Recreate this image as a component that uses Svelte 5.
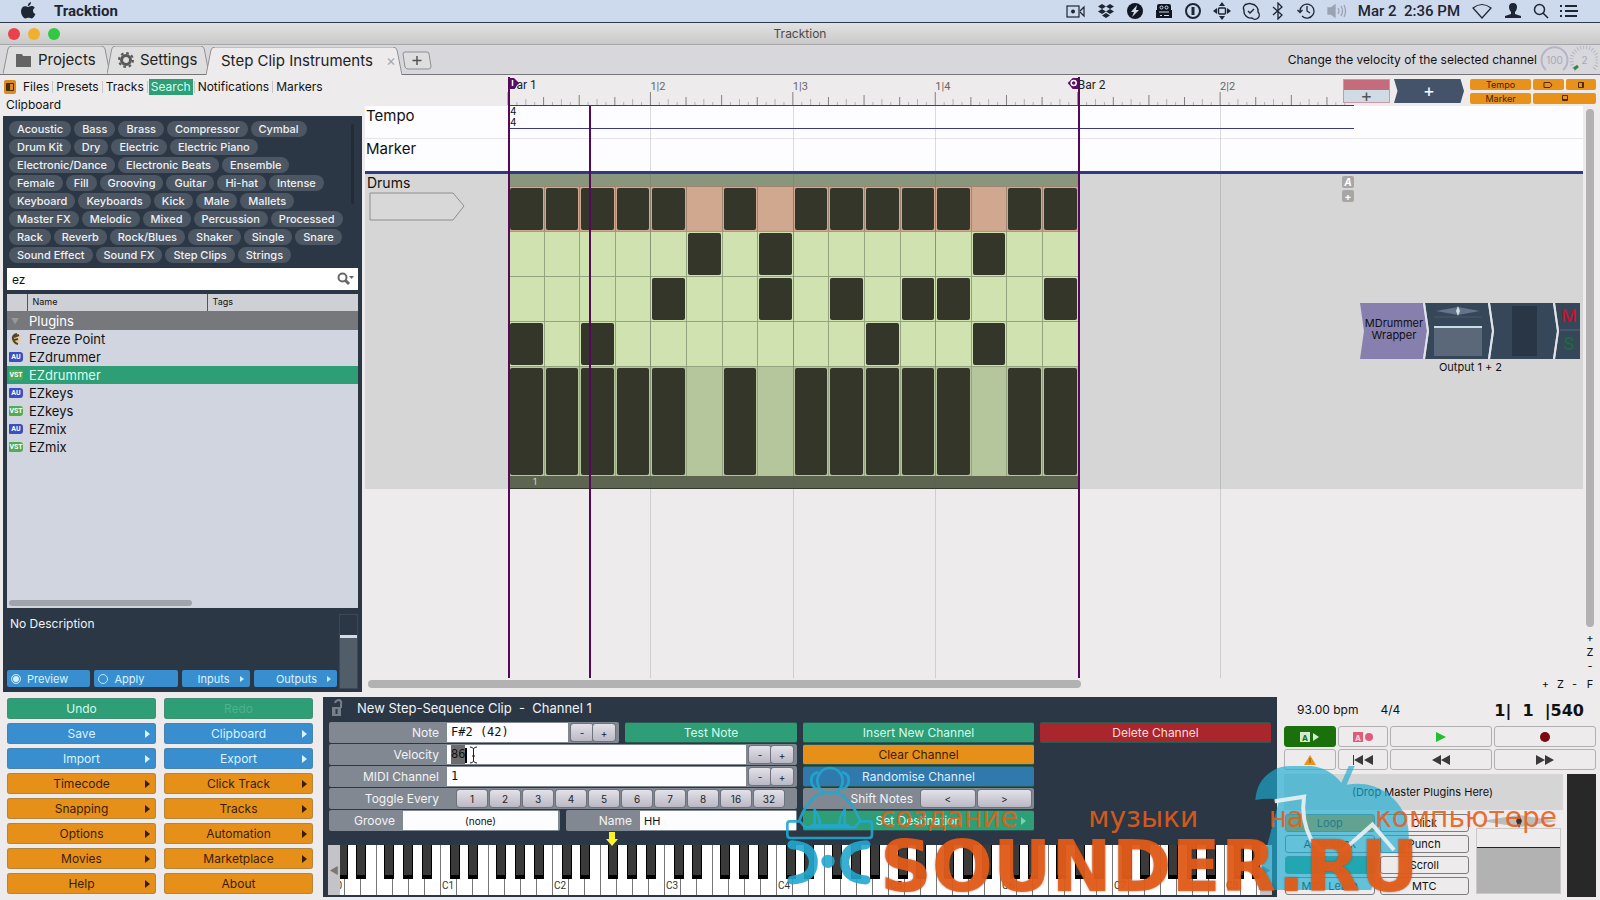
<script>
  const tabs = ['Files', 'Presets', 'Tracks', 'Search', 'Notifications', 'Markers', 'Clipboard'];
  let activeTab = $state('Search');

  const tagRows = [
    ['Acoustic', 'Bass', 'Brass', 'Compressor', 'Cymbal'],
    ['Drum Kit', 'Dry', 'Electric', 'Electric Piano'],
    ['Electronic/Dance', 'Electronic Beats', 'Ensemble'],
    ['Female', 'Fill', 'Grooving', 'Guitar', 'Hi-hat', 'Intense'],
    ['Keyboard', 'Keyboards', 'Kick', 'Male', 'Mallets'],
    ['Master FX', 'Melodic', 'Mixed', 'Percussion', 'Processed'],
    ['Rack', 'Reverb', 'Rock/Blues', 'Shaker', 'Single', 'Snare'],
    ['Sound Effect', 'Sound FX', 'Step Clips', 'Strings'],
  ];

  const plugins = [
    { type: 'FX', name: 'Freeze Point' },
    { type: 'AU', name: 'EZdrummer' },
    { type: 'VST', name: 'EZdrummer' },
    { type: 'AU', name: 'EZkeys' },
    { type: 'VST', name: 'EZkeys' },
    { type: 'AU', name: 'EZmix' },
    { type: 'VST', name: 'EZmix' },
  ];
  let selectedPlugin = $state(2);

  let search = $state('ez');
  let note = $state('F#2 (42)');
  let velocity = $state('86');
  let midiChannel = $state('1');
  let clipName = $state('HH');

  const menu = [
    { label: 'Undo', kind: 'green' },
    { label: 'Redo', kind: 'green', disabled: true },
    { label: 'Save', kind: 'blue', more: true },
    { label: 'Clipboard', kind: 'blue', more: true },
    { label: 'Import', kind: 'blue', more: true },
    { label: 'Export', kind: 'blue', more: true },
    { label: 'Timecode', kind: 'orange', more: true },
    { label: 'Click Track', kind: 'orange', more: true },
    { label: 'Snapping', kind: 'orange', more: true },
    { label: 'Tracks', kind: 'orange', more: true },
    { label: 'Options', kind: 'orange', more: true },
    { label: 'Automation', kind: 'orange', more: true },
    { label: 'Movies', kind: 'orange', more: true },
    { label: 'Marketplace', kind: 'orange', more: true },
    { label: 'Help', kind: 'orange', more: true },
    { label: 'About', kind: 'orange' },
  ];

  // x = step on, . = step off
  let pattern = $state([
    'xxxxx.x.xxxxx.xx',
    '.....x.x.....x..',
    '....x..x.x.xx..x',
    'x.x.......x..x..',
  ]);

  function toggleStep(row, i) {
    const s = pattern[row];
    pattern[row] = s.slice(0, i) + (s[i] === 'x' ? '.' : 'x') + s.slice(i + 1);
  }

  // beats shown between the left edge of the ruler and its right end
  const BEATS = 5.94;
  const pct = (beat) => (beat / BEATS) * 100;

  const ticks = Array.from({ length: 95 }, (_, i) => ({
    x: pct(i / 16),
    h: i % 16 === 0 ? 13 : i % 8 === 0 ? 10 : i % 4 === 0 ? 8 : i % 2 === 0 ? 6 : 3,
    c: i % 4 === 0 ? '#808080' : '#b2b2b2',
  }));
  const beatLabels = [
    { beat: 1, text: '1|2' },
    { beat: 2, text: '1|3' },
    { beat: 3, text: '1|4' },
    { beat: 5, text: '2|2' },
  ];

  const toggles = [1, 2, 3, 4, 5, 6, 7, 8, 16, 32];

  const KEY = 16;
  const whiteKeys = Array.from({ length: 59 }, (_, i) => i * KEY - 12);
  const octaves = Array.from({ length: 9 }, (_, i) => i * KEY * 7 - 12);
  const blackKeys = octaves.flatMap((x) => [10, 28, 56, 75, 94].map((o) => x + o)).filter((x) => x < 920);

  function selectAll(node) {
    node.focus();
    node.select();
  }
</script>

{#snippet stepper(label)}
  <span class="stepper">
    <button aria-label="{label} down">-</button><button aria-label="{label} up">+</button>
  </span>
{/snippet}

<div class="screen">
  <header class="menubar">
    <svg class="apple" width="16" height="18" viewBox="0 0 16 18" fill="#1d2634">
      <path d="M11 0c.2 2-1.400 4-3.200 4C7.600 2.200 9.200.4 11 0zM8 5c.8 0 2-1 3.600-1 1.400 0 2.500.7 3.200 1.700-2.700 1.600-2.200 5.300.6 6.300-.7 1.900-2.200 4.500-3.900 4.500-1.200 0-1.600-.7-3-.7s-1.900.7-3 .7C3.400 16.500 1 12.600 1 9.300 1 6.200 3 4.300 5 4.300 6.300 4.300 7.300 5 8 5z" />
    </svg>
    <b>Tracktion</b>
    <div class="tray">
      <svg width="20" height="16" viewBox="0 0 20 16" fill="none" stroke="#1d2634" stroke-width="1.200"><rect x="1" y="3" width="12" height="11" /><path d="M14 8l4-4v9l-4-4" /><circle cx="7" cy="8.500" r="2" fill="#1d2634" stroke="none" /></svg>
      <svg width="18" height="16" viewBox="0 0 18 16" fill="#1d2634"><path d="M5 1l4 2.500L5 6 1 3.500zM13 1l4 2.500L13 6 9 3.500zM5 6l4 2.500L5 11 1 8.500zM13 6l4 2.500-4 2.500-4-2.500zM9 10l4 2.500L9 15l-4-2.500z" /></svg>
      <svg width="18" height="18" viewBox="0 0 18 18"><circle cx="9" cy="9" r="8" fill="#111722" /><path d="M11 3L5 10h3l-2 5 7-7h-3z" fill="#cdd9ec" /></svg>
      <svg width="18" height="16" viewBox="0 0 18 16"><path d="M4 1h10q2 0 2 2v4h1v8H1V7h1V3q0-2 2-2z" fill="#111722" /><circle cx="6.500" cy="4.500" r="1.500" fill="none" stroke="#cdd9ec" /><circle cx="11.500" cy="4.500" r="1.500" fill="none" stroke="#cdd9ec" /><path d="M4 9h10M5 12.500h2M9 12.500h5" stroke="#cdd9ec" /></svg>
      <svg width="18" height="18" viewBox="0 0 18 18" fill="none" stroke="#1d2634" stroke-width="2"><circle cx="9" cy="9" r="7" /><path d="M9 5v8" stroke-width="3" /></svg>
      <svg width="18" height="18" viewBox="0 0 18 18" fill="#1d2634"><path d="M9 0l3 4H6zM9 18l3-4H6zM0 9l4-3v6zM18 9l-4-3v6z" /><rect x="5.500" y="6" width="7" height="6" rx="1" fill="none" stroke="#1d2634" stroke-width="1.500" /></svg>
      <svg width="18" height="18" viewBox="0 0 18 18" fill="none" stroke="#1d2634" stroke-width="1.400"><path d="M5.500 2a4 4 0 0 1 4 0 7 7 0 0 1 6.500 8 4 4 0 0 1-6 6A7 7 0 0 1 2 8a4 4 0 0 1 3.500-6zM6 9l2 2 4-4" /></svg>
      <svg width="14" height="18" viewBox="0 0 14 18" fill="none" stroke="#1d2634" stroke-width="1.300"><path d="M2 5l9 8-4 4V1l4 4-9 8" /></svg>
      <svg width="20" height="18" viewBox="0 0 20 18" fill="none" stroke="#1d2634" stroke-width="1.300"><path d="M4 9a7 7 0 1 1 2 5M1.500 8L4 10.500 6.500 8M11 4v5l3 2" /></svg>
      <svg width="20" height="16" viewBox="0 0 20 16" fill="none" stroke="#9aa3b3" stroke-width="1.300"><path d="M1 5h3l4-3v12l-4-3H1z" fill="#9aa3b3" /><path d="M11 5q2 3 0 6M14 3q3 5 0 10M17 2q3 6 0 12" /></svg>
      <span class="clock">Mar 2&nbsp; 2:36 PM</span>
      <svg width="22" height="16" viewBox="0 0 22 16" fill="none" stroke="#1d2634" stroke-width="1.200"><path d="M2 5q9-7 18 0l-9 10z" /></svg>
      <svg width="18" height="16" viewBox="0 0 18 16" fill="#1d2634"><path d="M9 0c3 0 4 2 4 4s-1 4-2 5v2l6 2v2H1v-2l6-2V9C6 8 5 6 5 4s1-4 4-4z" /></svg>
      <svg width="16" height="16" viewBox="0 0 16 16" fill="none" stroke="#1d2634" stroke-width="1.500"><circle cx="6.500" cy="6.500" r="5" /><path d="M10 10l5 5" /></svg>
      <svg width="18" height="14" viewBox="0 0 18 14" stroke="#1d2634" stroke-width="2"><path d="M5 2h12M5 7h13M5 12h12M0 2h2M0 7h2M0 12h2" /></svg>
    </div>
  </header>

  <div class="titlebar">
    <span class="light red"></span><span class="light amber"></span><span class="light lime"></span>
    <span class="title">Tracktion</span>
  </div>

  <nav class="tabbar">
    <button class="tab projects">
      <svg class="tab-shape" viewBox="0 0 108 28" preserveAspectRatio="none"><path d="M0 28L5 3q1-3 4-3h90q3 0 4 3l5 25" /></svg>
      <svg width="17" height="14" viewBox="0 0 17 14" fill="#646464"><path d="M1 1h6l1 2h8v11H1z" /></svg>
      Projects
    </button>
    <button class="tab settings">
      <svg class="tab-shape" viewBox="0 0 108 28" preserveAspectRatio="none"><path d="M0 28L5 3q1-3 4-3h90q3 0 4 3l5 25" /></svg>
      <svg width="16" height="16" viewBox="0 0 16 16" fill="none" stroke="#585858"><circle cx="8" cy="8" r="4.500" stroke-width="3" /><circle cx="8" cy="8" r="7" stroke-width="2" stroke-dasharray="2.700 2.800" /></svg>
      Settings
    </button>
    <button class="tab edit">
      <svg class="tab-shape active" viewBox="0 0 196 28" preserveAspectRatio="none"><path d="M0 28L5 3q1-3 4-3h178q3 0 4 3l5 25" /></svg>
      Step Clip Instruments <span class="close">×</span>
    </button>
    <button class="new-tab" aria-label="New tab">
      <svg width="30" height="19" viewBox="0 0 30 19" fill="#dedede" stroke="#8f8f93"><path d="M1 3q0-2 2-2h22q2 0 2 2l2 12q0 3-2 3H6q-2 0-3-2z" /><path d="M15 5v9M10.500 9.500h9" stroke="#555" stroke-width="1.500" /></svg>
    </button>
    <span class="hint">Change the velocity of the selected channel</span>
    <svg width="58" height="28" viewBox="0 0 58 28" fill="none" stroke="#b6b4ca" stroke-width="2">
      <path d="M6 24a13 13 0 1 1 17 0" />
      <path d="M36 24a13 13 0 1 1 17 0" stroke-width="4" stroke-dasharray="1 2" />
      <path d="M34 23l4-3" stroke="#2c8c3c" stroke-width="3" />
      <text x="14.500" y="18" class="dial">100</text><text x="44.500" y="18" class="dial">2</text>
    </svg>
  </nav>

  <main class="workspace">
    <aside class="sidebar">
      <div class="side-tabs">
        <svg width="12" height="14" viewBox="0 0 12 14"><rect width="12" height="14" rx="2" fill="#d98a22" /><path d="M2.500 3.500h7v7h-7z" fill="none" stroke="#4b2c05" /><path d="M3 4h3v6H3z" fill="#4b2c05" /></svg>
        {#each tabs as tab}
          <button class:active={tab === activeTab} onclick={() => (activeTab = tab)}>{tab}</button>
        {/each}
      </div>
      <section class="browser">
        <div class="tags">
          {#each tagRows as row}
            <div class="tag-row">
              {#each row as tag}<button>{tag}</button>{/each}
            </div>
          {/each}
        </div>
        <label class="search">
          <input type="text" aria-label="Search" bind:value={search} />
          <svg width="18" height="14" viewBox="0 0 18 14" fill="none" stroke="#686868" stroke-width="2"><circle cx="5.500" cy="5.500" r="4" /><path d="M8.500 8.500L12 12" stroke-width="3" /><path d="M12 4h5l-2.500 3z" fill="#686868" stroke="none" /></svg>
        </label>
        <div class="list">
          <table>
            <thead>
              <tr><th class="icon-col"></th><th class="name-col">Name</th><th>Tags</th></tr>
            </thead>
            <tbody>
              <tr class="group"><td><span class="fold">▼</span></td><td colspan="2">Plugins</td></tr>
              {#each plugins as p, i}
                <tr class:selected={i === selectedPlugin} onclick={() => (selectedPlugin = i)}>
                  <td>
                    {#if p.type === 'FX'}
                      <svg width="14" height="12" viewBox="0 0 14 12"><circle cx="7" cy="6" r="5" fill="#e2cfa8" /><path d="M8 1Q3 2 4 6t5 5M5 4l5-2M5 7l4-1" fill="none" stroke="#5a4420" stroke-width="2" /></svg>
                    {:else}
                      <span class="badge {p.type}">{p.type}</span>
                    {/if}
                  </td>
                  <td>{p.name}</td>
                  <td></td>
                </tr>
              {/each}
            </tbody>
          </table>
          <div class="list-scroll"></div>
        </div>
        <div class="info">
          <div class="info-main">
            <p>No Description</p>
            <div class="info-buttons">
              <label class="chip"><input type="checkbox" checked />Preview</label>
              <label class="chip"><input type="checkbox" />Apply</label>
              <button class="chip">Inputs <i></i></button>
              <button class="chip">Outputs <i></i></button>
            </div>
          </div>
          <input class="fader" type="range" min="0" max="100" value="72" aria-label="Preview level" />
        </div>
      </section>
    </aside>

    <section class="editor">
      <div class="arrange">
        <div class="ruler">
          <div class="time">
            <svg class="ticks" width="100%" height="31">
              {#each ticks as t}
                <line x1="{t.x}%" x2="{t.x}%" y1={30 - t.h} y2="30" stroke={t.c} stroke-width="1" />
              {/each}
              <line x1="0" x2="100%" y1="30.500" y2="30.500" stroke="#444" />
              <text x="1" y="14" class="bar-label">Bar 1</text>
              {#each beatLabels as l}
                <text x="{pct(l.beat)}%" y="15" class="beat-label">{l.text}</text>
              {/each}
              <text x="{pct(4)}%" y="14" class="bar-label">Bar 2</text>
              <path d="M0 3h6l5 5-5 6H0z" fill="#5b0c63" /><path d="M4.500 5v6" stroke="#fff" stroke-width="1.500" />
              <svg x="{pct(4)}%" class="out-mark"><path d="M1 3h-6l-5 5 5 6h6z" fill="#5b0c63" /><circle cx="-4" cy="8" r="2.500" fill="none" stroke="#fff" stroke-width="1.500" /></svg>
            </svg>
          </div>
          <div class="ruler-tools">
            <button class="clip-new" aria-label="New clip">+</button>
            <button class="plugin-new" aria-label="New plugin">+</button>
            <div class="view-buttons">
              <button>Tempo</button>
              <button aria-label="Inputs"><svg width="10" height="8" viewBox="0 0 10 8" fill="none" stroke="#4b2c05"><path d="M1 1.500h6l2 2.500-2 2.500H1z" /></svg></button>
              <button aria-label="Filters"><svg width="8" height="8" viewBox="0 0 8 8" fill="none" stroke="#4b2c05"><path d="M1.500 1.500h5v5h-5zM5.500 1v6" /></svg></button>
              <button>Marker</button>
              <button class="bottom" aria-label="Controls"><svg width="8" height="8" viewBox="0 0 8 8" fill="none" stroke="#4b2c05"><path d="M1.500 1.500h5v5h-5zM1 5.500h6" /></svg></button>
            </div>
          </div>
        </div>

        <div class="lane tempo"><span class="lane-name">Tempo</span><div class="signature">4<br />4</div></div>
        <div class="lane marker"><span class="lane-name">Marker</span></div>

        <div class="track">
          <div class="track-head">
            Drums
            <svg width="96" height="29" viewBox="0 0 96 29" fill="#d8d8d8" stroke="#8e8e8e"><path d="M1 1h83l11 13-11 14H1z" /></svg>
          </div>
          <div class="track-time">
            <div class="clip" style="width: {pct(4)}%">
              <div class="clip-head"></div>
              {#each pattern as row, r}
                <div class="steps" class:hot={r === 0}>
                  {#each row as s, i}
                    <button class:on={s === 'x'} aria-label="Channel {r + 1} step {i + 1}" onclick={() => toggleStep(r, i)}></button>
                  {/each}
                </div>
              {/each}
              <div class="steps velocities">
                {#each pattern[0] as s}<span class:on={s === 'x'}></span>{/each}
              </div>
              <div class="clip-foot">1</div>
            </div>
            <div class="auto-buttons"><button><i>A</i></button><button>+</button></div>
          </div>
          <div class="track-out">
            <svg width="221" height="56" viewBox="0 0 221 56">
              <path d="M0 0h63l4 28-4 28H0l4-28z" fill="#877fae" />
              <path d="M65 0h63l4 28-4 28H65l4-28z" fill="#364759" />
              <path d="M130 0h63l4 28-4 28h-63l4-28z" fill="#364759" />
              <path d="M195 0h25v56h-25l4-28z" fill="#364759" />
              <path d="M64 0l4 28-4 28M129 0l4 28-4 28M194 0l4 28-4 28" fill="none" stroke="#dfe4ea" stroke-width="2" />
              <path d="M76 8l22-4 22 4-22 4z" fill="#65748a" /><path d="M98 3l2 5-2 5-2-5z" fill="#cfe0e6" />
              <path d="M74 14h48" stroke="#4b5a6c" /><path d="M74 25h48v28H74z" fill="#5b6879" /><path d="M74 24h48" stroke="#c4e0e6" stroke-width="2" />
              <rect x="152" y="3" width="25" height="50" fill="#293646" />
              <path d="M200 27h20" stroke="#586779" />
              <text x="34" y="24" class="plug">MDrummer</text><text x="34" y="36" class="plug">Wrapper</text>
              <text x="209" y="19" class="ms" fill="#c41230">M</text><text x="209" y="47" class="ms" fill="#1c6b3c">S</text>
            </svg>
            <span>Output 1 + 2</span>
          </div>
        </div>
        <div class="overlay">
          {#each beatLabels as l}<span class="grid-line" style="left: {pct(l.beat)}%"></span>{/each}
          <span class="locator" style="left: 0%"></span>
          <span class="locator" style="left: {pct(4)}%"></span>
          <span class="locator playhead" style="left: {pct(0.572)}%"></span>
        </div>
      </div>
      <div class="v-scroll"><div></div><button>+</button><span>Z</span><button>-</button></div>
      <div class="h-scroll"><div></div><span class="zoom"><button>+</button><span>Z</span><button>-</button></span></div>
      <button class="fit">F</button>
    </section>
  </main>

  <footer class="bottom-bar">
    <div class="menu">
      {#each menu as m}
        <button class={m.kind} disabled={m.disabled}>{m.label}{#if m.more}<i></i>{/if}</button>
      {/each}
    </div>

    <section class="properties">
      <h2>
        <svg width="12" height="18" viewBox="0 0 12 18" fill="none" stroke="#76808b" stroke-width="2"><path d="M4 4q1-3 4-3 3 1 2 5v3" /><path d="M1 8h9v9H1z" fill="#76808b" stroke="none" /><path d="M5.500 10v5" stroke="#2b3744" /></svg>
        New Step-Sequence Clip&nbsp; -&nbsp; Channel 1
      </h2>
      <div class="props">
        <div class="col-left">
          <div class="pair">
            <div class="field note"><label for="note">Note</label><input id="note" bind:value={note} />{@render stepper('Note')}</div>
            <button class="act green">Test Note</button>
          </div>
          <div class="field"><label for="velocity">Velocity</label><input id="velocity" bind:value={velocity} {@attach selectAll} />{@render stepper('Velocity')}
            <svg class="ibeam" width="12" height="18" viewBox="0 0 12 18" fill="none" stroke="#222"><path d="M5 1q3 0 3.500 2Q9 1 12 1M8.500 3v12M5 17q3 0 3.500-2Q9 17 12 17M7 10h3" /><path d="M1 2v15" stroke="#000" stroke-width="2" /></svg>
          </div>
          <div class="field"><label for="midi">MIDI Channel</label><input id="midi" bind:value={midiChannel} />{@render stepper('MIDI channel')}</div>
          <div class="field"><span class="name">Toggle Every</span><div class="toggles">{#each toggles as n}<button>{n}</button>{/each}</div></div>
          <div class="pair halves">
            <div class="field"><label for="groove">Groove</label><select id="groove"><option>(none)</option></select></div>
            <div class="field"><label for="clip-name">Name</label><input id="clip-name" class="plain" bind:value={clipName} /></div>
          </div>
        </div>
        <div class="col">
          <button class="act green">Insert New Channel</button>
          <button class="act orange">Clear Channel</button>
          <button class="act navy">Randomise Channel</button>
          <div class="field shift"><span class="name">Shift Notes</span><button>&lt;</button><button>&gt;</button></div>
          <button class="act green">Set Destination<i></i></button>
        </div>
        <div class="col"><button class="act red">Delete Channel</button></div>
      </div>
      <div class="keyboard">
        <svg class="pointer" width="12" height="14" viewBox="0 0 12 14" fill="#fbf32a"><path d="M3 0h6v7h3l-6 7-6-7h3z" /></svg>
        <span class="key-scroll">◀</span>
        <svg class="keys" height="50">
          <rect width="100%" height="50" fill="#fff" />
          {#each whiteKeys as x}<path d="M{x + 0.5} 0v50" stroke="#777" />{/each}
          {#each octaves as x, i}<text x={x + 8} y="44">C{i}</text>{/each}
          {#each blackKeys as x}<rect {x} width="10" height="34" fill="#000" /><rect x={x + 1} width="8" height="30" fill="#3a3a3a" />{/each}
        </svg>
        <span class="key-scroll">▶</span>
      </div>
    </section>

    <section class="transport">
      <div class="readout"><span>93.00 bpm</span><span>4/4</span><b>1|&nbsp; 1 &nbsp;|540</b></div>
      <div class="buttons">
        <button class="auto" aria-label="Read automation"><svg width="20" height="10" viewBox="0 0 20 10"><rect width="10" height="10" fill="#d5ead0" /><text x="5" y="9" class="mini" fill="#1a700b">A</text><path d="M13 1l6 4-6 4z" fill="#d5ead0" /></svg></button>
        <button aria-label="Write automation"><svg width="20" height="10" viewBox="0 0 20 10"><rect width="10" height="10" fill="#dd5b7d" /><text x="5" y="9" class="mini" fill="#f7d6df">A</text><circle cx="16" cy="5" r="4" fill="#dd5b7d" /></svg></button>
        <button aria-label="Play"><svg width="10" height="10" viewBox="0 0 10 10" fill="#1fc02a"><path d="M0 0l10 5-10 5z" /></svg></button>
        <button aria-label="Record"><svg width="10" height="10" viewBox="0 0 10 10" fill="#7d0512"><circle cx="5" cy="5" r="5" /></svg></button>
        <button aria-label="Panic"><svg width="12" height="10" viewBox="0 0 12 10" fill="#e8951e"><path d="M6 0l6 10H0z" /><path d="M6 3v5" stroke="#8a4e05" /></svg></button>
        <button aria-label="Return to start"><svg width="20" height="10" viewBox="0 0 20 10" fill="#3a3a3a"><path d="M0 0h1v10H0zM10 0v10L1 5zM20 0v10l-9-5z" /></svg></button>
        <button aria-label="Rewind"><svg width="18" height="10" viewBox="0 0 18 10" fill="#3a3a3a"><path d="M9 0v10L0 5zM18 0v10L9 5z" /></svg></button>
        <button aria-label="Fast forward"><svg width="18" height="10" viewBox="0 0 18 10" fill="#3a3a3a"><path d="M0 0v10l9-5zM9 0v10l9-5z" /></svg></button>
      </div>
      <div class="master">
        <div class="master-main">
          <div class="drop">(Drop Master Plugins Here)</div>
          <div class="master-low">
            <div class="modes">
              <button class="orange">Loop</button><button>Click</button>
              <button>Auto Lock</button><button>Punch</button>
              <button class="green">Snap</button><button>Scroll</button>
              <button>MIDI Learn</button><button>MTC</button>
            </div>
            <div class="volume">
              <svg width="76" height="14" viewBox="0 0 76 14"><path d="M0 7l38-6 38 6-38 6z" fill="#bcbcbc" /><path d="M38 0l3 7-3 7-3-7z" fill="#333" /></svg>
              <input class="fader light-fader" type="range" min="0" max="100" value="71" aria-label="Master volume" />
            </div>
          </div>
        </div>
        <div class="meter"></div>
      </div>
    </section>

    <div class="watermark">
      <svg class="apple-mark" width="156" height="126" viewBox="0 0 468 378" fill="#1cacd0">
        <path d="M4 102Q8 40 60 12Q80 0 110 0H170Q225 5 262 50L284 0H302L278 56Q350 45 400 82Q468 135 464 218L448 262H378L352 372H14Q14 330 26 290L76 100Q40 96 4 102z" opacity="0.660" />
        <path d="M62 106L150 92Q140 160 172 222L208 258M262 258L355 176L420 252" fill="none" stroke="#eef1f2" stroke-width="12" opacity="0.900" />
      </svg>
      <svg class="dj-mark" width="90" height="120" viewBox="0 0 270 360" fill="none" stroke="#22a8d0" stroke-width="8" opacity="0.900">
        <circle cx="132" cy="44" r="38" /><path d="M96 18q-22 6-20 28 2 20 22 22M168 18q22 6 20 28-2 20-22 22" />
        <path d="M40 164q18-52 56-78 36-14 70 0 36 26 56 78M86 124v52M176 124v52M86 132q16 20 16 46M176 132q-16 20-16 46M74 178h116M42 166H12q-8 0-8 8v32q0 10 10 10h234q10 0 10-10v-32q0-8-8-8h-28l-16 18H58z" />
        <path d="M18 236Q82 240 82 289Q82 338 18 342M240 236Q176 240 176 289Q176 338 240 342" stroke-width="27" stroke-linecap="round" />
        <circle cx="126" cy="286" r="20" fill="#22a8d0" stroke="none" />
      </svg>
      <div class="brand"><p>создание музыки на компьютере</p><strong>SOUNDER.RU</strong></div>
    </div>
  </footer>
</div>

<style>
  :global(body) { background: #ececec; }
  .screen {
    height: 100vh;
    display: flex;
    flex-direction: column;
    overflow: hidden;
    font: 12px/16px Inter, Roboto, "Liberation Sans", sans-serif;
    color: #111;
    background: #edebec;
  }
  .screen * { box-sizing: border-box; }
  button, input, select { font: inherit; color: inherit; margin: 0; padding: 0; border: 0; background: none; border-radius: 0; outline: none; }
  button { white-space: nowrap; }
  p, h2 { margin: 0; }
  svg { flex: none; }

  .menubar { height: 23px; flex: none; display: flex; align-items: center; background: #cdd9ec; border-bottom: 1px solid #2c3a4e; font-size: 15px; color: #1d2634; font-family: Roboto, sans-serif; padding: 0 22px 0 20px; }
  .menubar b { margin-left: 18px; font-size: 15px; }
  .tray { margin-left: auto; display: flex; align-items: center; gap: 11px; }
  .clock { font-size: 15px; font-weight: 500; }

  .titlebar { height: 22px; flex: none; display: flex; align-items: center; gap: 8px; padding-left: 8px; position: relative; background: linear-gradient(#e2e2e2, #c9c9c9); border-bottom: 1px solid #a8a8a8; }
  .light { width: 12px; height: 12px; border-radius: 50%; }
  .red { background: #e8424c; }
  .amber { background: #f0b02e; }
  .lime { background: #32c844; }
  .title { position: absolute; left: 0; right: 0; text-align: center; color: #4a4a4a; }

  .tabbar { height: 30px; flex: none; display: flex; align-items: flex-end; background: #d8d8dc; border-bottom: 1px solid #77777b; padding-left: 3px; padding-right: 2px; }
  .tab { position: relative; isolation: isolate; height: 28px; display: flex; align-items: center; gap: 6px; font-size: 15px; color: #222; }
  .tab-shape { position: absolute; inset: 0; width: 100%; height: 100%; z-index: -1; fill: #dfdfdf; stroke: #8f8f93; }
  .tab-shape.active { fill: #edebec; }
  .projects { width: 107px; padding-left: 12px; }
  .settings { width: 102px; padding-left: 11px; margin-left: -3px; }
  .edit { width: 196px; padding-left: 15px; margin-left: -3px; margin-bottom: -1px; }
  .close { margin-left: auto; padding-right: 6px; color: #aaa; }
  .new-tab { height: 24px; }
  .hint { margin: 0 3px 6px auto; font-size: 12px; }
  .dial { font-size: 10px; text-anchor: middle; fill: #a8a6bc; stroke: none; }

  .workspace { flex: 1; min-height: 0; display: flex; }
  .sidebar { width: 362px; flex: none; display: flex; flex-direction: column; padding: 0 0 2px 3px; }
  .side-tabs { height: 41px; padding: 4px 1px 3px; display: flex; flex-wrap: wrap; align-items: center; align-content: space-between; }
  .side-tabs button { padding: 0 2px; height: 16px; margin-right: 3px; position: relative; }
  .side-tabs button:nth-of-type(-n + 5)::after { content: ""; position: absolute; right: -2px; top: 2px; width: 1px; height: 12px; background: #c6c6c6; }
  .side-tabs svg { margin-right: 5px; }
  .side-tabs .active { background: #2e9e76; color: #d6fff0; }
  .browser { flex: 1; min-height: 0; background: #2b3744; display: flex; flex-direction: column; padding: 5px 4px 4px; }
  .tags { display: flex; flex-direction: column; gap: 2px; padding: 0 12px 5px 2px; position: relative; }
  .tags::after { content: ""; position: absolute; right: 4px; top: 3px; width: 3px; height: 80px; background: #222b36; border-radius: 2px; }
  .tag-row { display: flex; gap: 3px; }
  .tag-row button { height: 16px; line-height: 16px; padding: 0 8px; border-radius: 8px; background: #4c5763; color: #eef1f4; font-size: 11px; font-weight: 500; }
  .search { display: flex; align-items: center; height: 22px; flex: none; background: #fff; padding: 0 3px 0 5px; margin-bottom: 4px; }
  .search input { flex: 1; height: 22px; }
  .list { flex: 1; min-height: 0; background: #d1d5df; display: flex; flex-direction: column; justify-content: space-between; }
  table { width: 100%; border-collapse: collapse; table-layout: fixed; font-size: 13px; }
  th { height: 17px; padding: 0 5px; text-align: left; font-size: 9px; line-height: 16px; font-weight: 400; background: #cfd0d5; border-right: 1px solid #555; border-bottom: 1px solid #77787c; }
  th:last-child { border-right: 0; }
  .icon-col { width: 20px; }
  .name-col { width: 180px; }
  td { height: 18px; padding: 0 2px; line-height: 18px; white-space: nowrap; vertical-align: middle; }
  td svg, .badge, .fold { display: block; }
  .group { background: #77787b; color: #fff; }
  .fold { font-size: 8px; line-height: 12px; color: #999; padding-left: 2px; }
  .selected { background: #2e9e76; color: #d6fff0; }
  .badge { width: 14px; height: 10px; font: bold 7px/10px Roboto, sans-serif; text-align: center; color: #fff; background: #3b50c0; border-radius: 1px 3px 3px 1px; }
  .VST { background: #51ad51; }
  .list-scroll { width: 183px; height: 6px; margin: 2px; border-radius: 3px; background: #a0a5ac; }
  .info { display: flex; gap: 2px; height: 80px; flex: none; padding-top: 6px; }
  .info-main { flex: 1; display: flex; flex-direction: column; justify-content: space-between; color: #f0f2f4; }
  .info-main p { padding: 2px 3px; font-size: 12px; }
  .info-buttons { display: grid; grid-template-columns: 84fr 84fr 68fr 84fr; gap: 4px; padding-bottom: 1px; font-size: 11px; color: #dff2ff; }
  .chip { height: 17px; display: flex; align-items: center; gap: 6px; padding: 0 4px; background: #388ece; border-radius: 2px; }
  button.chip { justify-content: flex-end; gap: 10px; padding-right: 6px; }
  .chip input { appearance: none; width: 10px; height: 10px; border: 1px solid #bfe4fb; border-radius: 50%; }
  .chip input:checked { background: #d8f0ff; box-shadow: inset 0 0 0 1px #388ece; }
  .chip i { border: 3px solid transparent; border-left: 4px solid #c8ecff; border-right: 0; }
  .fader { appearance: none; writing-mode: vertical-lr; direction: rtl; width: 19px; height: 75px; border: 1px solid #3e4854; background: linear-gradient(transparent 28%, #d4dae4 28% 31%, #525d6a 31%); }
  .fader::-webkit-slider-thumb { appearance: none; width: 19px; height: 2px; background: transparent; }
  .light-fader { width: 100%; height: 66px; border-color: #c9c9c9; background: linear-gradient(transparent 28%, #222 28% 30%, #b2b2b2 30%); }

  .editor { flex: 1; min-width: 0; padding-left: 3px; display: grid; grid-template-columns: 1fr 17px; grid-template-rows: 1fr 19px; --label: 143px; --right: 229px; }
  .arrange { position: relative; }
  .ruler { height: 31px; display: flex; padding-left: var(--label); margin-right: -17px; }
  .time { flex: 1; }
  .ticks { display: block; overflow: visible; }
  .out-mark { overflow: visible; }
  .bar-label { font: 12px Roboto, sans-serif; fill: #222; }
  .beat-label { font: 11px Roboto, sans-serif; fill: #666; }
  .ruler-tools { width: 257px; flex: none; display: flex; gap: 4px; padding: 4px 4px 2px 0; margin-left: -11px; }
  .clip-new { width: 47px; height: 24px; border: 1px solid #cf97a3; background: linear-gradient(#c46c7c 45%, #cfdce5 45%); color: #555; font-size: 18px; line-height: 12px; padding-top: 9px; }
  .plugin-new { width: 70px; height: 24px; background: #44536a; color: #fff; font-size: 18px; clip-path: polygon(0 0, 95% 0, 100% 50%, 95% 100%, 0 100%, 5% 50%); }
  .view-buttons { flex: 1; display: grid; grid-template-columns: 2fr 1fr 1fr; gap: 2px; padding-left: 2px; }
  .view-buttons button { height: 11px; line-height: 11px; background: #e8921c; border-radius: 2px; font-size: 9px; color: #3a2305; display: flex; align-items: center; justify-content: center; }
  .view-buttons .bottom { grid-column: span 2; }
  .lane { background: #fdfcfe; font-size: 15px; line-height: 20px; padding-left: 1px; display: flex; }
  .lane-name { width: 142px; }
  .tempo { height: 33px; border-bottom: 1px solid #e8e4e8; }
  .marker { height: 35px; border-bottom: 3px solid #2f3a86; }
  .signature { flex: 1; margin-right: var(--right); height: 23px; border-bottom: 1px solid #3a3a80; font: 10px/11px Inter, sans-serif; padding-left: 2px; }
  .track { height: 315px; background: #d6d6d6; display: flex; }
  .track-head { width: var(--label); padding-left: 2px; font-size: 14px; line-height: 18px; display: flex; flex-direction: column; }
  .track-head svg { margin-left: 2px; }
  .track-time { flex: 1; display: flex; justify-content: space-between; }
  .clip { display: flex; flex-direction: column; }
  .clip-head { height: 12px; background: #8a967b; }
  .steps { display: grid; grid-template-columns: repeat(16, 1fr); height: 45px; background: #d0e2b0; border-top: 1px solid #93a47e; }
  .steps > * { display: block; border-left: 1px solid #93a47e; padding: 1px; }
  .steps > .on::before { content: ""; display: block; width: 100%; height: 100%; background: #333629; border-radius: 2px; }
  .hot { background: #cfa88f; border-color: #a08672; }
  .hot > * { border-color: #a08672; }
  .velocities { height: 110px; background: #b6c69c; }
  .clip-foot { height: 13px; background: #5d6550; border-bottom: 1px solid #333a2c; color: #d5dccb; font-size: 9px; line-height: 12px; padding-left: 25px; }
  .auto-buttons { display: flex; flex-direction: column; gap: 2px; padding-top: 2px; }
  .auto-buttons button { width: 12px; height: 12px; background: #a6a6a6; color: #fff; font: bold 10px/12px Inter, sans-serif; border-radius: 2px; }
  .track-out { width: var(--right); padding: 129px 2px 0 6px; }
  .track-out svg { display: block; }
  .track-out span { display: block; text-align: center; font-size: 11px; }
  .plug { font-size: 11px; text-anchor: middle; fill: #111; }
  .ms { font: 500 17px Inter, sans-serif; text-anchor: middle; }
  .overlay { position: absolute; left: var(--label); right: var(--right); top: 2px; bottom: -3px; pointer-events: none; }
  .grid-line { position: absolute; top: 29px; bottom: 0; width: 1px; background: rgba(80, 90, 90, 0.2); }
  .locator { position: absolute; top: 0; bottom: 0; width: 2px; background: #540a56; }
  .playhead { top: 29px; }
  .v-scroll { display: flex; flex-direction: column; align-items: center; font-size: 11px; line-height: 14px; padding: 34px 3px 2px 0; }
  .v-scroll div { flex: 1; width: 8px; margin-bottom: 4px; border-radius: 4px; background: #b2b2b2; }
  .h-scroll { display: flex; align-items: center; justify-content: space-between; padding: 0 6px 2px 3px; font-size: 11px; }
  .h-scroll div { width: 59%; height: 8px; border-radius: 4px; background: #b2b2b2; }
  .zoom { display: flex; gap: 8px; }
  .fit { font-size: 11px; height: 17px; padding-right: 3px; }

  .bottom-bar { height: 206px; flex: none; position: relative; display: flex; gap: 10px; padding: 3px 4px 3px 7px; }
  .menu { width: 306px; flex: none; display: grid; grid-template-columns: 1fr 1fr; gap: 4px 8px; padding-top: 1px; align-content: start; }
  .menu button { position: relative; height: 21px; border-radius: 3px; box-shadow: inset 0 0 0 1px rgba(100, 120, 120, 0.4); }
  .menu i { position: absolute; right: 6px; top: 7px; border: 4px solid transparent; border-left: 5px solid; border-right: 0; }
  .green { background: #2e9e76; color: #d3fbee; }
  .blue { background: #388ece; color: #d9f3ff; }
  .orange { background: #e79019; color: #3a1d08; }
  .navy { background: #3079ac; color: #dcefff; }
  .menu button:disabled { color: #4db28f; }

  .properties { flex: 1; min-width: 0; background: #2b3744; padding: 0 6px; color: #f2f3f5; display: flex; flex-direction: column; }
  h2 { height: 21px; margin-bottom: 4px; display: flex; align-items: center; gap: 14px; font-size: 13px; font-weight: 400; padding-left: 2px; }
  .props { display: flex; gap: 6px; }
  .col-left { flex: 468; display: flex; flex-direction: column; gap: 1px; }
  .col { flex: 231; display: flex; flex-direction: column; gap: 1px; }
  .pair { display: flex; gap: 6px; }
  .field { position: relative; height: 21px; display: flex; align-items: center; background: #828892; border-radius: 2px; }
  .field label, .name { width: 118px; flex: none; text-align: right; padding-right: 8px; }
  .field input { flex: 1; width: 0; height: 19px; background: #fdfcfe; color: #111; font: 12px/19px "DejaVu Sans Mono", monospace; padding: 0 4px; }
  .field input::selection { background: #6c6c6c; color: #111; }
  .field .plain { font: 11px Inter, sans-serif; margin-right: 1px; }
  .halves .field { flex: 1; }
  .halves label { width: 74px; }
  select { appearance: none; flex: 1; height: 19px; background: #fdfcfe; color: #111; font-size: 10px; text-align: center; text-align-last: center; margin-right: 2px; }
  .note { flex: 290; }
  .pair .act { flex: 172; }
  .stepper { display: flex; padding: 0 4px 0 3px; }
  .stepper button, .toggles button, .shift button { width: 22px; height: 17px; background: linear-gradient(#e3e2ea, #b9b8c4); color: #222; font-size: 10px; border-radius: 3px; box-shadow: 0 0 0 1px #6d727c; }
  .toggles { display: flex; gap: 3px; padding-left: 10px; }
  .toggles button { width: 30px; }
  .shift button { flex: 1; margin-right: 3px; }
  .ibeam { position: absolute; left: 136px; top: 2px; }
  .act { position: relative; height: 21px; border-radius: 2px; border: 1px solid #2b5a55; border-width: 1px 0; }
  .act i { position: absolute; right: 8px; top: 6px; border: 4px solid transparent; border-left: 5px solid #7fd0b2; border-right: 0; }
  .red.act { background: #a8262c; color: #f9dcdc; }
  .keyboard { position: relative; display: flex; height: 50px; margin: auto -1px 2px; }
  .keys { flex: 1; min-width: 0; overflow: hidden; }
  .keys text { font: 10px Roboto, sans-serif; text-anchor: middle; fill: #333; }
  .key-scroll { width: 12px; background: #c4c4c8; color: #777; font-size: 10px; line-height: 50px; text-align: center; }
  .pointer { position: absolute; left: 278px; top: -13px; }

  .transport { width: 312px; flex: none; margin-left: -3px; display: flex; flex-direction: column; }
  .readout { height: 29px; display: flex; align-items: center; gap: 22px; padding: 0 12px 3px 13px; font-size: 12px; }
  .readout b { margin-left: auto; font: bold 16px "DejaVu Sans", sans-serif; }
  .buttons { display: grid; grid-template-columns: 52px 50px 1fr 1fr; gap: 2px; }
  .buttons button { height: 21px; border: 1px solid #b0b0b0; border-radius: 3px; display: flex; align-items: center; justify-content: center; }
  .buttons .auto { background: #1a700b; border-color: #1a700b; }
  .mini { font: bold 8px Inter, sans-serif; text-anchor: middle; }
  .master { flex: 1; display: flex; gap: 4px; padding-top: 4px; }
  .master-main { flex: 1; display: flex; flex-direction: column; gap: 4px; }
  .drop { height: 36px; line-height: 36px; text-align: center; background: #d6d5d6; font-size: 11px; padding: 0 20px 0 18px; }
  .master-low { display: flex; gap: 7px; }
  .modes { flex: 1; display: grid; grid-template-columns: 1fr 1fr; gap: 3px 5px; padding-left: 1px; }
  .modes button { height: 18px; border: 1px solid #7d7d7d; border-radius: 3px; font-size: 11px; line-height: 16px; }
  .volume { width: 87px; text-align: center; line-height: 0; padding-right: 2px; }
  .meter { width: 29px; background: #282828; }

  .watermark { position: absolute; inset: 0; pointer-events: none; overflow: hidden; }
  .apple-mark { position: absolute; right: 190px; bottom: 8px; }
  .dj-mark { position: absolute; right: 724px; bottom: 14px; }
  .brand { position: absolute; right: 43px; bottom: 0; width: 677px; font-family: "DejaVu Sans", sans-serif; color: rgba(232, 93, 24, 0.900); }
  .brand p { font-size: 28px; line-height: 28px; text-align-last: justify; }
  .brand strong { display: block; font-size: 72px; line-height: 68px; text-shadow: 0 0 2px rgba(90, 50, 30, 0.600); }
</style>
